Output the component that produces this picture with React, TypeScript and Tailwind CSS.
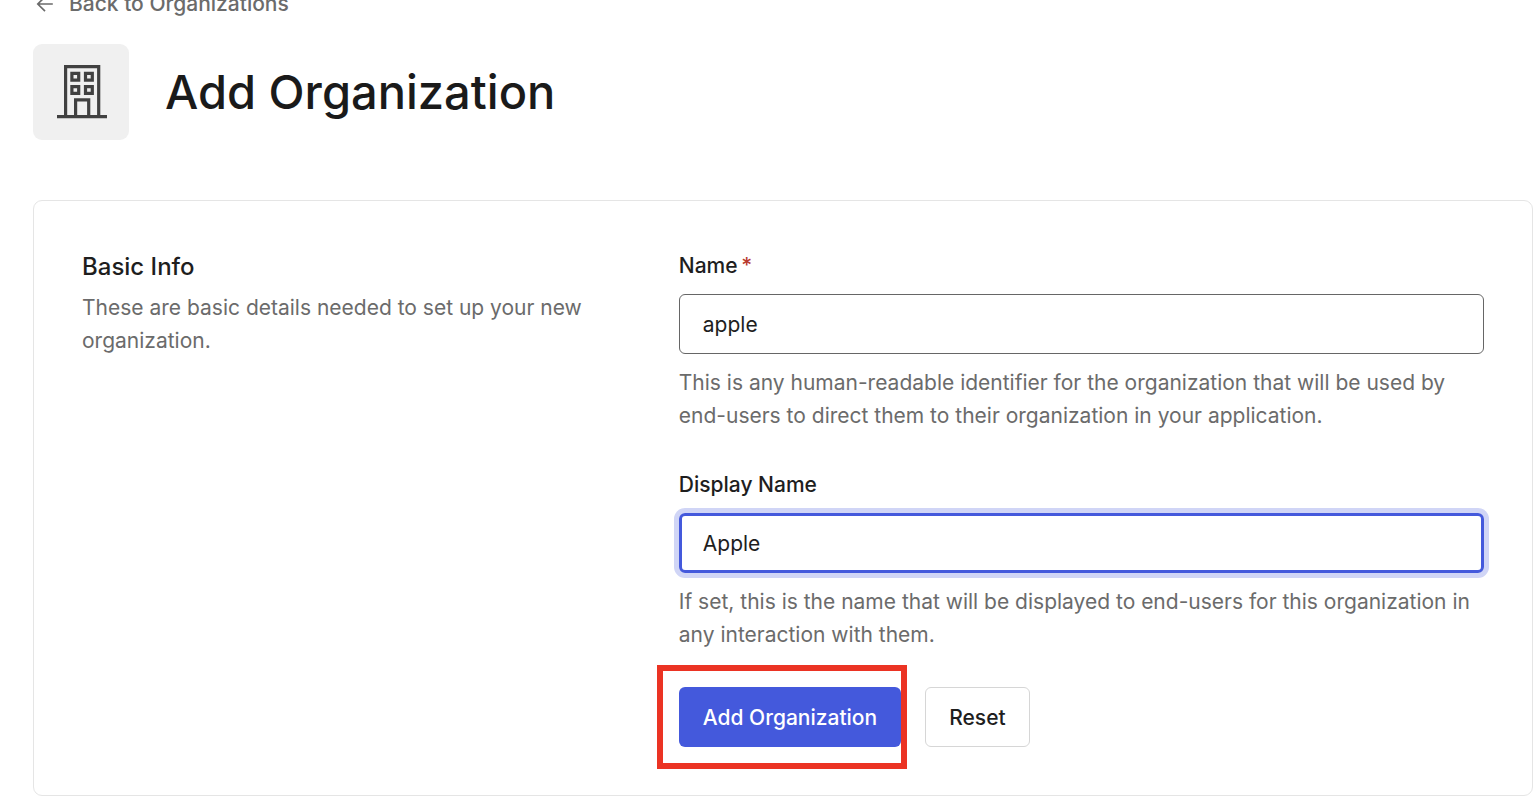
import { useState } from "react";

function BackArrow() {
  return (
    <svg width="24" height="24" viewBox="0 0 24 24" fill="none" stroke="currentColor" strokeWidth="1.7" aria-hidden="true">
      <path d="M19.800 12H5M12 4.800L4.800 12L12 19.200" />
    </svg>
  );
}

function BuildingIcon() {
  return (
    <svg width="52" height="54" viewBox="-2 0 52 54" fill="none" stroke="currentColor" strokeWidth="3.2" aria-hidden="true">
      <path d="M8.600 51V1.600H41.700V51" />
      <path d="M0 51.600H50" />
      <path d="M18.600 51V34.900H31.700V51" />
      <path d="M14.900 8.400h6.800v6.800h-6.800zM28.500 8.400h6.800v6.800h-6.800zM14.900 21.600h6.800v6.800h-6.800zM28.500 21.600h6.800v6.800h-6.800z" />
    </svg>
  );
}

export default function App() {
  const [name, setName] = useState("apple");
  const [displayName, setDisplayName] = useState("Apple");

  const reset = () => {
    setName("");
    setDisplayName("");
  };

  return (
    <main className="overflow-hidden bg-white pb-3 pl-[33px] pr-[7px] font-['Inter','Liberation_Sans',sans-serif] text-[21px] leading-[33px] text-[#1e1e1e]">
      <a href="#organizations" className="-mt-[13px] mb-6 flex w-fit items-center gap-3 font-medium text-[#6b6b6b]">
        <BackArrow />
        Back to Organizations
      </a>

      <header className="mb-[60px] flex items-center gap-9">
        <div className="flex size-24 items-center justify-center rounded-[9px] bg-[#f0f0f0] text-[#414141]">
          <BuildingIcon />
        </div>
        <h1 className="text-[47px] leading-[48px] font-medium text-[#1a1a1a]">Add Organization</h1>
      </header>

      <section className="grid grid-cols-[2fr_3fr] gap-[60px] rounded-[9px] border border-[#e5e5e5] p-12">
        <div>
          <h2 className="mb-1.5 text-2xl leading-9 font-medium">Basic Info</h2>
          <p className="text-[#6b6b6b]">These are basic details needed to set up your new organization.</p>
        </div>

        <form className="flex flex-col gap-9" onSubmit={(e) => e.preventDefault()}>
          <div className="flex flex-col gap-3">
            <label htmlFor="name" className="font-medium">
              Name <span className="-ml-0.5 text-[#b93a2f]">*</span>
            </label>
            <input
              id="name"
              required
              value={name}
              onChange={(e) => setName(e.target.value)}
              className="h-15 w-full rounded-md border border-[#666666] px-[23px] outline-none"
            />
            <p className="text-[#6b6b6b]">
              This is any human-readable identifier for the organization that will be used by end-users to direct them to
              their organization in your application.
            </p>
          </div>

          <div className="flex flex-col gap-3">
            <label htmlFor="display-name" className="font-medium">
              Display Name
            </label>
            <input
              id="display-name"
              value={displayName}
              onChange={(e) => setDisplayName(e.target.value)}
              className="h-15 w-full rounded-md border-3 border-[#4459dc] px-[21px] ring-5 ring-[#d0d5f6] outline-none"
            />
            <p className="text-[#6b6b6b]">
              If set, this is the name that will be displayed to end-users for this organization in any interaction with
              them.
            </p>
          </div>

          <div className="flex gap-6">
            <div className="relative">
              <button type="submit" className="h-15 rounded-md bg-[#4459dc] px-6 font-medium text-white">
                Add Organization
              </button>
              <div className="pointer-events-none absolute -top-[22px] -right-1.5 -bottom-[22px] -left-[22px] border-6 border-[#eb3323]" />
            </div>
            <button type="button" onClick={reset} className="h-15 rounded-md border border-[#d6d6d6] px-[23px] font-medium">
              Reset
            </button>
          </div>
        </form>
      </section>
    </main>
  );
}
